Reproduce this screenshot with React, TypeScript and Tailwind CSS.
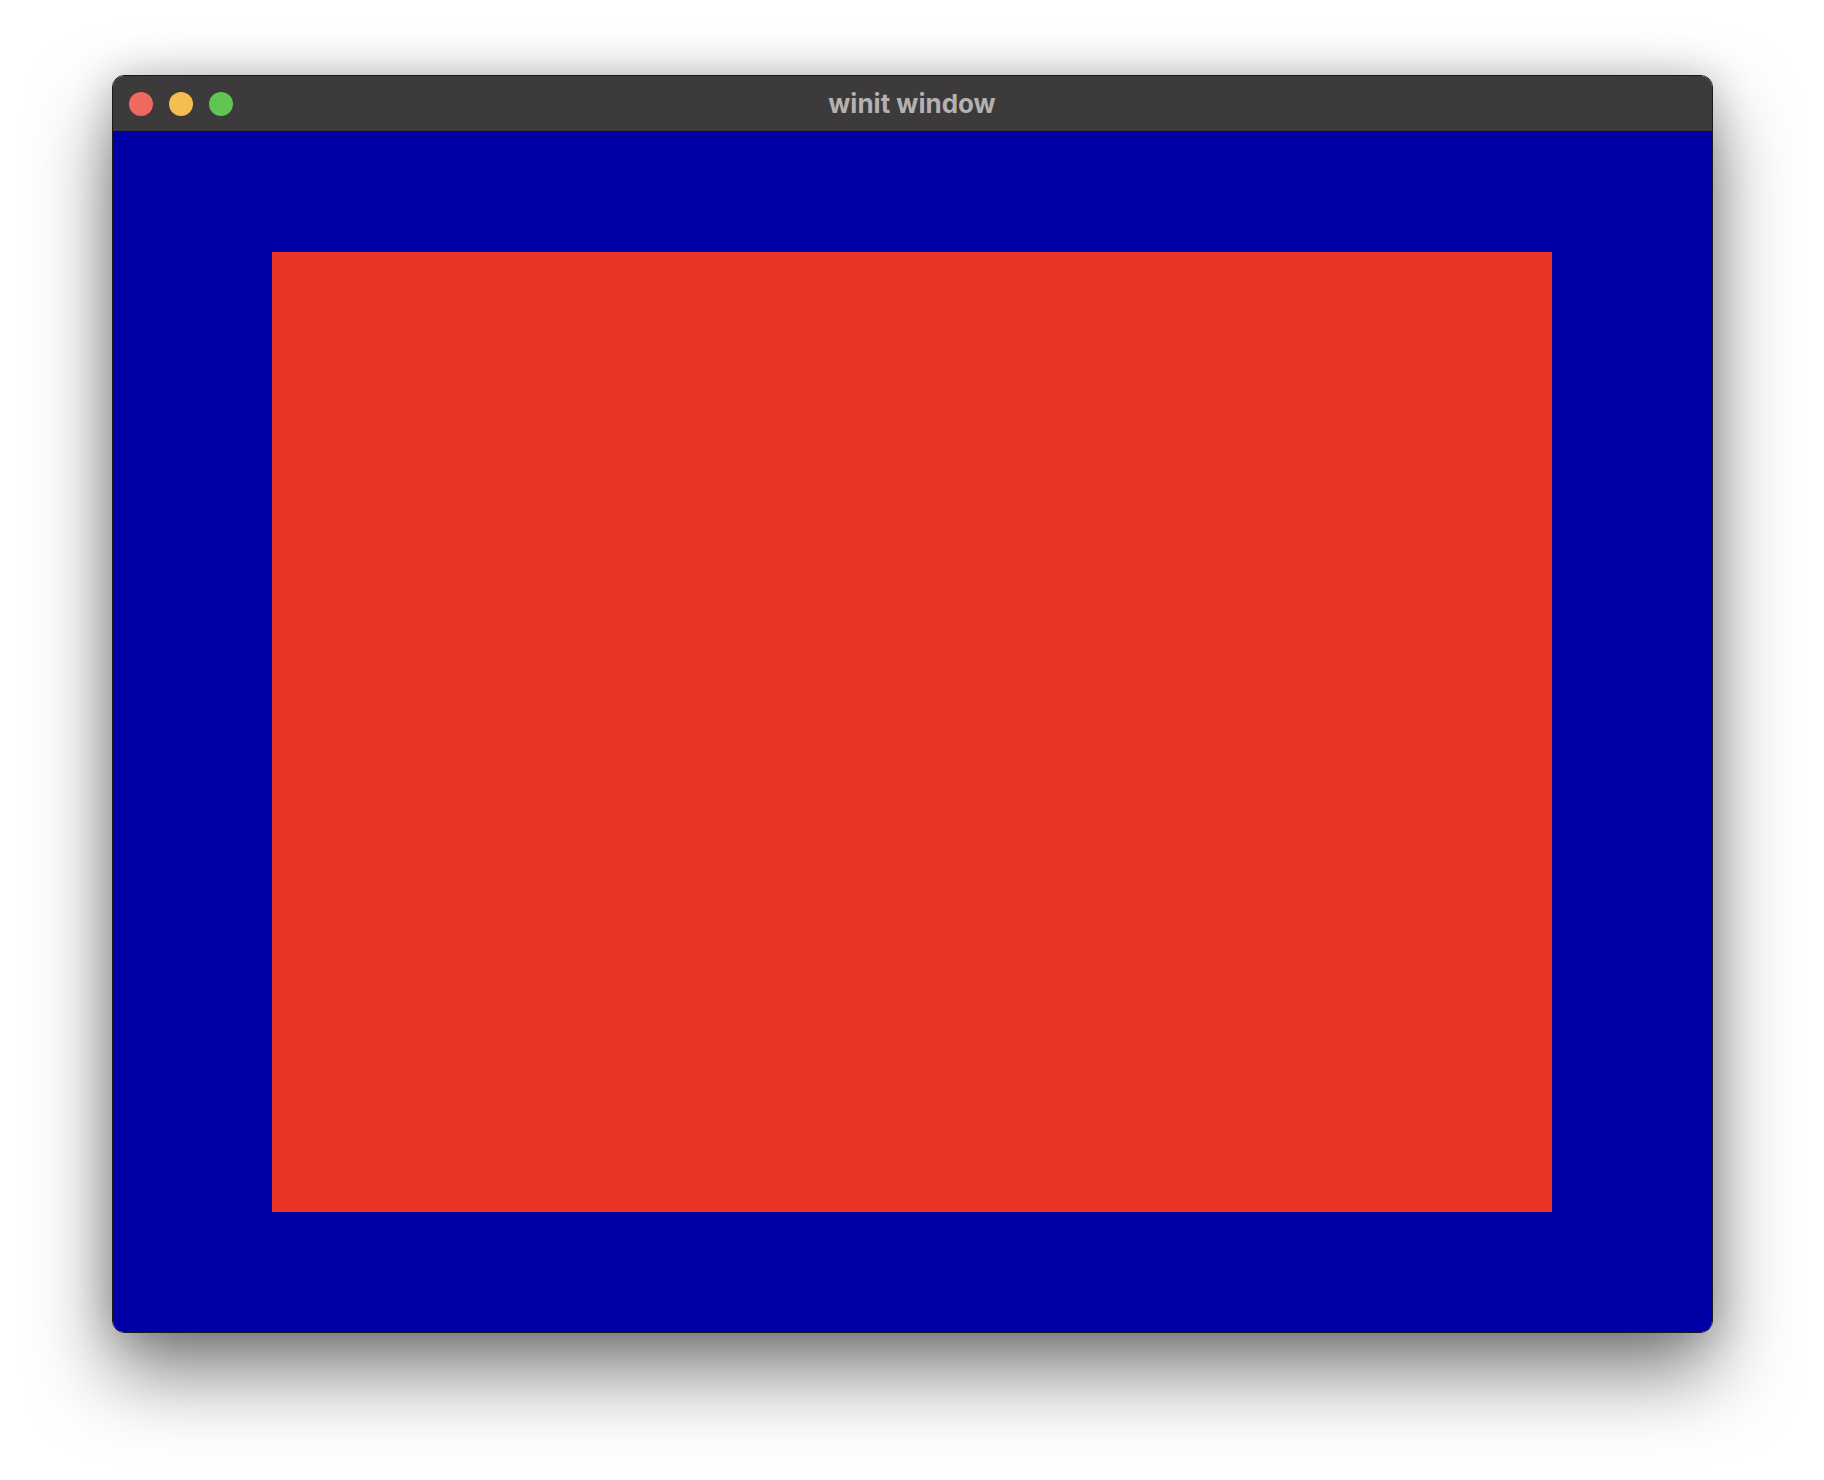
export default function App() {
  return (
    <div className="flex h-[1480px] w-[1824px] items-start justify-center bg-white pt-[75px]">
      <div className="flex w-[1601px] flex-col overflow-hidden rounded-[12px] border border-[#1a1a1a] shadow-[0_40px_80px_rgba(0,0,0,0.5),0_0_40px_rgba(0,0,0,0.2)]">
        <div className="relative flex h-[56px] items-center border-b border-[#111] bg-[#3c3a3a] px-[16px]">
          <div className="flex gap-[16px]">
            <span className="h-[24px] w-[24px] rounded-full bg-[#ee6a5f]" />
            <span className="h-[24px] w-[24px] rounded-full bg-[#f5bf4f]" />
            <span className="h-[24px] w-[24px] rounded-full bg-[#61c554]" />
          </div>
          <div className="absolute inset-0 flex items-center justify-center font-['Inter','Liberation_Sans',sans-serif] text-[26px] font-bold text-[#b3b1b1]">
            winit window
          </div>
        </div>
        <div className="flex h-[1200px] items-center justify-center bg-[#0000a6]">
          <div className="h-[960px] w-[1280px] bg-[#e93323]" />
        </div>
      </div>
    </div>
  );
}
